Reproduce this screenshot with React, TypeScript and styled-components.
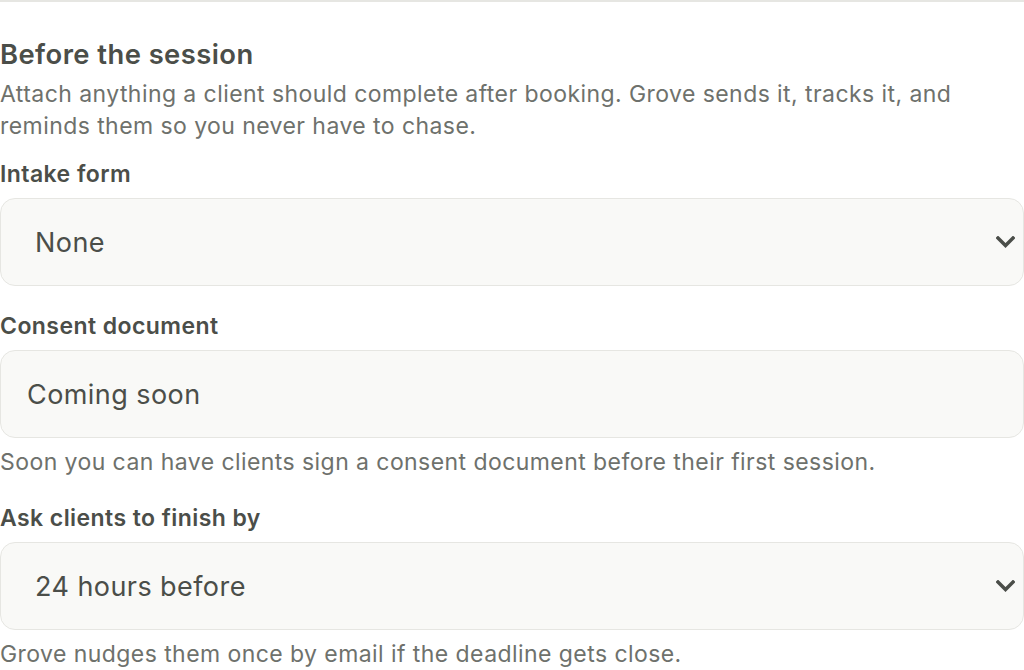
import styled, { createGlobalStyle } from 'styled-components';

const ink = '#4b4e49';
const muted = '#6e716c';
const line = '#e6e6e2';
const field = '#f9f9f7';

const GlobalStyle = createGlobalStyle`
  html, body {
    margin: 0;
    padding: 0;
    background: #ffffff;
    font-family: Inter, "Noto Sans", "Liberation Sans", sans-serif;
    letter-spacing: 0.027em;
    -webkit-font-smoothing: antialiased;
  }
`;

const Section = styled.section`
  width: 1024px;
  box-sizing: border-box;
  border-top: 2px solid ${line};
  padding-top: 36px;
  display: flex;
  flex-direction: column;
`;

const Header = styled.header`
  display: flex;
  flex-direction: column;
  gap: 8px;
  margin-bottom: 17px;
`;

const Title = styled.h2`
  margin: 0;
  font-size: 27.4px;
  line-height: 32px;
  font-weight: 600;
  color: ${ink};
`;

const Lead = styled.p`
  margin: 0;
  font-size: 23px;
  line-height: 32px;
  color: ${muted};
`;

const Group = styled.div`
  display: flex;
  flex-direction: column;
  & + & {
    margin-top: 25px;
  }
`;

const Label = styled.label`
  font-size: 23px;
  line-height: 30px;
  font-weight: 600;
  color: ${ink};
  margin-bottom: 9px;
`;

const Box = styled.div<{ $inset: number }>`
  position: relative;
  height: 88px;
  box-sizing: border-box;
  border: 1.5px solid ${line};
  border-radius: 15px;
  background: ${field};
  display: flex;
  align-items: center;
  padding-left: ${p => p.$inset}px;
  font-size: 27px;
  color: ${ink};
`;

const Chevron = styled.svg`
  position: absolute;
  right: 8px;
  top: 50%;
  transform: translateY(-50%);
  width: 19px;
  height: 12px;
`;

const Help = styled.p`
  margin: 8px 0 0;
  font-size: 23px;
  line-height: 32px;
  color: ${muted};
`;

const SelectBox = ({ value }: { value: string }) => (
  <Box $inset={34}>
    {value}
    <Chevron viewBox='0 0 19 12' fill='none'>
      <path d='M2 2l7.5 7.5L17 2' stroke={ink} strokeWidth='3.4' strokeLinecap='square' />
    </Chevron>
  </Box>
);

export default function App() {
  return (
    <>
      <GlobalStyle />
      <Section>
        <Header>
          <Title>Before the session</Title>
          <Lead>
            Attach anything a client should complete after booking. Grove sends it, tracks it, and
            reminds them so you never have to chase.
          </Lead>
        </Header>

        <Group>
          <Label>Intake form</Label>
          <SelectBox value='None' />
        </Group>

        <Group>
          <Label>Consent document</Label>
          <Box $inset={26}>Coming soon</Box>
          <Help>Soon you can have clients sign a consent document before their first session.</Help>
        </Group>

        <Group>
          <Label>Ask clients to finish by</Label>
          <SelectBox value='24 hours before' />
          <Help>Grove nudges them once by email if the deadline gets close.</Help>
        </Group>
      </Section>
    </>
  );
}
